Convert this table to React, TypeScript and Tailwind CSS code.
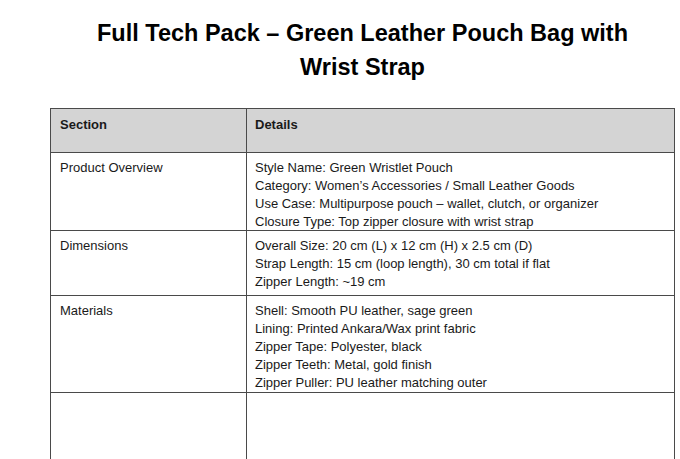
const rows = [
  {
    section: 'Product Overview',
    height: 'h-[78px]',
    details: [
      'Style Name: Green Wristlet Pouch',
      'Category: Women’s Accessories / Small Leather Goods',
      'Use Case: Multipurpose pouch – wallet, clutch, or organizer',
      'Closure Type: Top zipper closure with wrist strap',
    ],
  },
  {
    section: 'Dimensions',
    height: 'h-[65px]',
    details: [
      'Overall Size: 20 cm (L) x 12 cm (H) x 2.5 cm (D)',
      'Strap Length: 15 cm (loop length), 30 cm total if flat',
      'Zipper Length: ~19 cm',
    ],
  },
  {
    section: 'Materials',
    height: 'h-[97px]',
    details: [
      'Shell: Smooth PU leather, sage green',
      'Lining: Printed Ankara/Wax print fabric',
      'Zipper Tape: Polyester, black',
      'Zipper Teeth: Metal, gold finish',
      'Zipper Puller: PU leather matching outer',
    ],
  },
  { section: '', height: 'h-[90px]', details: [] },
];

export default function App() {
  return (
    <div
      className="w-[680px] h-[459px] overflow-hidden bg-white text-[#1a1a1a]"
      style={{ fontFamily: "'Liberation Sans', Arial, sans-serif" }}
    >
      <div className="ml-[50px] w-[625px]">
        {/* Title */}
        <h1 className="pt-[16px] text-center text-[23.5px] leading-[34px] font-bold text-black">
          Full Tech Pack – Green Leather Pouch Bag with
          <br />
          Wrist Strap
        </h1>

        {/* Table */}
        <div className="mt-[24px] grid grid-cols-[196px_1fr] border-l border-t border-[#4a4a4a]">
          <div className="h-[44px] bg-[#d4d4d4] border-r border-b border-[#4a4a4a] pl-[9px] pt-[7px] text-[13px] font-bold leading-[18px]">
            Section
          </div>
          <div className="h-[44px] bg-[#d4d4d4] border-r border-b border-[#4a4a4a] pl-[8px] pt-[7px] text-[13px] font-bold leading-[18px]">
            Details
          </div>

          {rows.map((row, i) => (
            <div key={i} className="contents">
              <div className={`${row.height} border-r border-b border-[#4a4a4a] pl-[9px] pt-[6px] text-[13px] leading-[18px]`}>
                {row.section}
              </div>
              <div className={`${row.height} border-r border-b border-[#4a4a4a] pl-[8px] pt-[6px] text-[13px] leading-[18px]`}>
                {row.details.map((line) => (
                  <div key={line}>{line}</div>
                ))}
              </div>
            </div>
          ))}
        </div>
      </div>
    </div>
  );
}
